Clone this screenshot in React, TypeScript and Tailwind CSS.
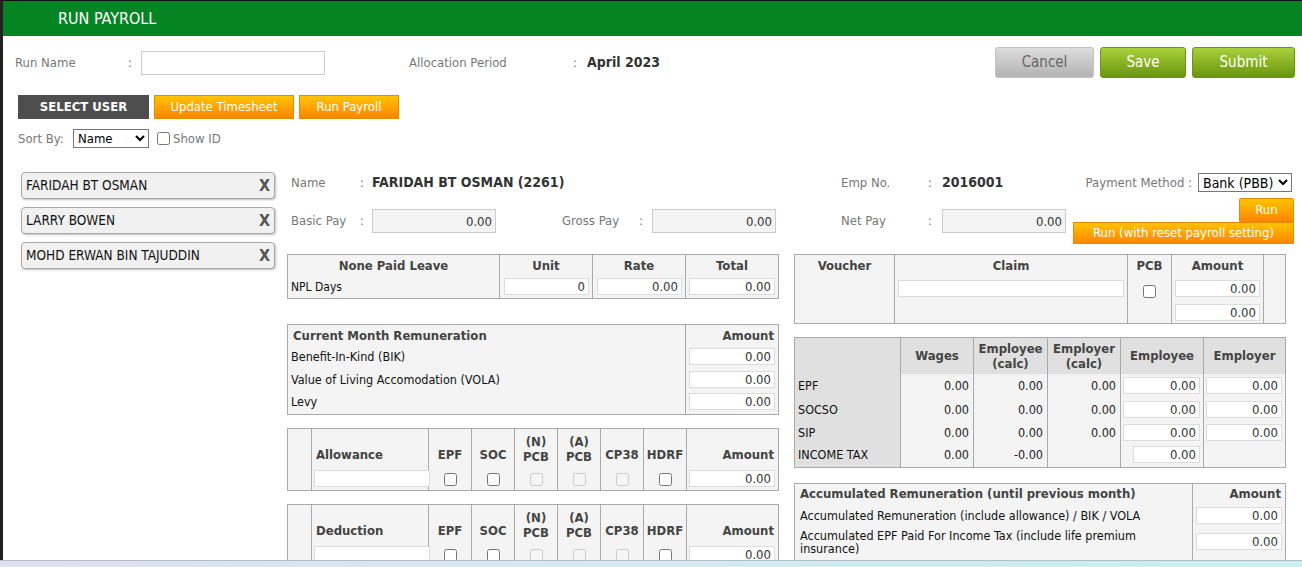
import React from 'react'

const Inp = ({ w = 'w-[86px]', v = '0.00' }: { w?: string; v?: string }) => (
  <input
    readOnly
    value={v}
    className={`${w} h-[17px] border border-[#dcdcdc] bg-white px-[3px] text-right text-[13px] leading-none text-[#333] outline-none`}
  />
)

const Cb = ({ off = false }: { off?: boolean }) => (
  <input type="checkbox" disabled={off} className="m-0 h-[13px] w-[13px] align-middle" />
)

const users = ['FARIDAH BT OSMAN', 'LARRY BOWEN', 'MOHD ERWAN BIN TAJUDDIN']

const stat = [
  { k: 'EPF', w: '0.00', a: '0.00', b: '0.00', r: true },
  { k: 'SOCSO', w: '0.00', a: '0.00', b: '0.00', r: true },
  { k: 'SIP', w: '0.00', a: '0.00', b: '0.00', r: true },
  { k: 'INCOME TAX', w: '0.00', a: '-0.00', b: '', r: false },
]

function FlagTable({ title }: { title: string }) {
  return (
    <table className="w-[492px] table-fixed border-collapse border border-[#aaa] bg-[#f4f4f4]">
      <colgroup>
        <col className="w-[24px]" />
        <col className="w-[117px]" />
        <col className="w-[43px]" />
        <col className="w-[43px]" />
        <col className="w-[43px]" />
        <col className="w-[43px]" />
        <col className="w-[43px]" />
        <col className="w-[43px]" />
        <col />
      </colgroup>
      <tbody>
        <tr className="h-[40px] text-[13px] font-bold leading-[15px] text-[#444]">
          <td rowSpan={2} className="border-r border-[#aaa]"></td>
          <td className="pt-[12px] pl-[4px] text-left align-middle">{title}</td>
          <td className="border-l border-[#aaa] pt-[12px] text-center align-middle">EPF</td>
          <td className="border-l border-[#aaa] pt-[12px] text-center align-middle">SOC</td>
          <td className="border-l border-[#aaa] text-center align-middle">(N)<br />PCB</td>
          <td className="border-l border-[#aaa] text-center align-middle">(A)<br />PCB</td>
          <td className="border-l border-[#aaa] pt-[12px] text-center align-middle">CP38</td>
          <td className="border-l border-[#aaa] pt-[12px] text-center align-middle">HDRF</td>
          <td className="border-l border-[#aaa] pt-[12px] pr-[4px] text-right align-middle">Amount</td>
        </tr>
        <tr className="h-[22px]">
          <td className="pl-[2px] align-top">
            <input readOnly className="h-[17px] w-[116px] border border-[#dcdcdc] bg-white outline-none" />
          </td>
          <td className="border-l border-[#aaa] text-center align-top"><Cb /></td>
          <td className="border-l border-[#aaa] text-center align-top"><Cb /></td>
          <td className="border-l border-[#aaa] text-center align-top"><Cb off /></td>
          <td className="border-l border-[#aaa] text-center align-top"><Cb off /></td>
          <td className="border-l border-[#aaa] text-center align-top"><Cb off /></td>
          <td className="border-l border-[#aaa] text-center align-top"><Cb /></td>
          <td className="border-l border-[#aaa] pr-[3px] text-right align-top"><Inp /></td>
        </tr>
      </tbody>
    </table>
  )
}

export default function App() {
  return (
    <div className="min-h-screen border-t border-l-[3px] border-t-[#111] border-l-[#222] bg-white font-['DejaVu_Sans_Condensed','DejaVu_Sans',sans-serif] text-[13px] font-stretch-condensed text-[#111]">
      <div className="flex h-[35px] items-center bg-[#058423] pl-[55px] text-[16px] text-white">RUN PAYROLL</div>

      {/* top form */}
      <div className="flex items-center pt-[11px] pl-[12px] pr-[7px]">
        <span className="w-[113px] text-[#777]">Run Name</span>
        <span className="w-[13px] text-[#777]">:</span>
        <input readOnly className="h-[24px] w-[184px] border border-[#ccc] bg-white outline-none" />
        <span className="ml-[84px] w-[164px] text-[#777]">Allocation Period</span>
        <span className="w-[14px] text-[#777]">:</span>
        <span className="text-[14px] font-bold text-[#333]">April 2023</span>
        <div className="ml-auto flex gap-[6px] text-[15px]">
          <button className="h-[31px] w-[99px] rounded-[3px] border border-[#c2c2c2] bg-linear-to-b from-[#dcdcdc] to-[#b3b3b3] text-[#666]">Cancel</button>
          <button className="h-[31px] w-[86px] rounded-[3px] border border-[#6f9212] bg-linear-to-b from-[#a9d13a] to-[#6a9609] text-white">Save</button>
          <button className="h-[31px] w-[103px] rounded-[3px] border border-[#6f9212] bg-linear-to-b from-[#a9d13a] to-[#6a9609] text-white">Submit</button>
        </div>
      </div>

      <div className="mt-[17px] flex gap-[5px] pl-[15px] text-[13px]">
        <div className="flex h-[24px] w-[131px] items-center justify-center bg-[#4e4e4e] font-bold text-white">SELECT USER</div>
        <button className="h-[24px] w-[140px] border border-[#e88a00] bg-linear-to-b from-[#ffc400] to-[#ff8400] text-white">Update Timesheet</button>
        <button className="h-[24px] w-[100px] border border-[#e88a00] bg-linear-to-b from-[#ffc400] to-[#ff8400] text-white">Run Payroll</button>
      </div>

      <div className="mt-[10px] flex h-[19px] items-center pl-[15px] text-[13px] text-[#777]">
        <span className="w-[55px]">Sort By:</span>
        <select className="h-[19px] w-[76px] border border-[#767676] bg-white text-[13px] text-black">
          <option>Name</option>
        </select>
        <input type="checkbox" className="m-0 ml-[8px] h-[13px] w-[13px]" />
        <span className="ml-[3px]">Show ID</span>
      </div>

      {/* body */}
      <div className="flex">
        <div className="w-[284px] shrink-0 pt-[24px] pl-[18px]">
          <div className="flex flex-col gap-[8px]">
            {users.map((u) => (
              <div
                key={u}
                className="flex h-[27px] w-[254px] items-center justify-between rounded-[4px] border border-[#a8a8a8] bg-[#f1f1f1] pl-[4px] pr-[4px] shadow-[1px_1px_2px_rgba(0,0,0,0.25)]"
              >
                <span className="text-[13.5px] text-[#111]">{u}</span>
                <span className="font-['DejaVu_Sans',sans-serif] text-[16px] font-bold text-[#555]">X</span>
              </div>
            ))}
          </div>
        </div>

        <div className="flex-1 pt-[25px]">
          <div className="flex h-[19px] items-center">
            <span className="w-[73px] pl-[4px] text-[#777]">Name</span>
            <span className="w-[12px] text-[#777]">:</span>
            <span className="w-[469px] text-[14px] font-bold text-[#333]">FARIDAH BT OSMAN (2261)</span>
            <span className="w-[87px] text-[#777]">Emp No.</span>
            <span className="w-[14px] text-[#777]">:</span>
            <span className="text-[14px] font-bold text-[#333]">2016001</span>
            <div className="ml-auto flex items-center gap-[6px] pr-[10px]">
              <span className="text-[#777]">Payment Method :</span>
              <select className="h-[19px] w-[94px] border border-[#767676] bg-white text-[14px] text-black">
                <option>Bank (PBB)</option>
              </select>
            </div>
          </div>

          <div className="mt-[6px] flex h-[46px] items-center">
            <span className="w-[73px] pl-[4px] text-[#777]">Basic Pay</span>
            <span className="w-[12px] text-[#777]">:</span>
            <input readOnly value="0.00" className="h-[24px] w-[124px] border border-[#ccc] bg-[#f4f4f4] pr-[3px] text-right text-[13px] text-[#333] outline-none" />
            <span className="ml-[66px] w-[77px] text-[#777]">Gross Pay</span>
            <span className="w-[13px] text-[#777]">:</span>
            <input readOnly value="0.00" className="h-[24px] w-[124px] border border-[#ccc] bg-[#f4f4f4] pr-[3px] text-right text-[13px] text-[#333] outline-none" />
            <span className="ml-[65px] w-[87px] text-[#777]">Net Pay</span>
            <span className="w-[14px] text-[#777]">:</span>
            <input readOnly value="0.00" className="h-[24px] w-[124px] border border-[#ccc] bg-[#f4f4f4] pr-[3px] text-right text-[13px] text-[#333] outline-none" />
            <div className="ml-auto flex flex-col items-end self-stretch pr-[8px] text-[13px] text-white">
              <button className="h-[24px] w-[55px] rounded-t-[2px] border border-[#e88a00] bg-linear-to-b from-[#ffc400] to-[#ff8400]">Run</button>
              <button className="h-[22px] w-[221px] border border-[#e88a00] bg-linear-to-b from-[#ffc400] to-[#ff8400]">Run (with reset payroll setting)</button>
            </div>
          </div>

          <div className="mt-[10px] flex gap-[15px]">
            {/* middle column */}
            <div className="flex w-[492px] flex-col">
              <table className="w-[492px] table-fixed border-collapse border border-[#aaa] bg-[#f4f4f4]">
                <colgroup>
                  <col className="w-[212px]" />
                  <col className="w-[93px]" />
                  <col className="w-[93px]" />
                  <col />
                </colgroup>
                <thead>
                  <tr className="h-[21px] text-[13px] font-bold text-[#444]">
                    <th>None Paid Leave</th>
                    <th className="border-l border-[#aaa]">Unit</th>
                    <th className="border-l border-[#aaa]">Rate</th>
                    <th className="border-l border-[#aaa]">Total</th>
                  </tr>
                </thead>
                <tbody>
                  <tr className="h-[23px]">
                    <td className="pl-[3px] text-[12px]">NPL Days</td>
                    <td className="border-l border-[#aaa] pr-[3px] text-right"><Inp w="w-[85px]" v="0" /></td>
                    <td className="border-l border-[#aaa] pr-[3px] text-right"><Inp w="w-[85px]" /></td>
                    <td className="border-l border-[#aaa] pr-[3px] text-right"><Inp w="w-[86px]" /></td>
                  </tr>
                </tbody>
              </table>

              <table className="mt-[25px] w-[492px] table-fixed border-collapse border border-[#aaa] bg-[#f4f4f4]">
                <colgroup>
                  <col className="w-[398px]" />
                  <col />
                </colgroup>
                <thead>
                  <tr className="h-[21px] text-[13px] font-bold text-[#444]">
                    <th className="pl-[5px] text-left">Current Month Remuneration</th>
                    <th className="border-l border-[#aaa] pr-[4px] text-right">Amount</th>
                  </tr>
                </thead>
                <tbody className="text-[12.5px]">
                  {['Benefit-In-Kind (BIK)', 'Value of Living Accomodation (VOLA)', 'Levy'].map((r) => (
                    <tr key={r} className="h-[23px]">
                      <td className="pl-[3px]">{r}</td>
                      <td className="border-l border-[#aaa] pr-[3px] text-right"><Inp /></td>
                    </tr>
                  ))}
                </tbody>
              </table>

              <div className="mt-[13px]"><FlagTable title="Allowance" /></div>
              <div className="mt-[13px]"><FlagTable title="Deduction" /></div>
            </div>

            {/* right column */}
            <div className="flex w-[492px] flex-col">
              <table className="w-[492px] table-fixed border-collapse border border-[#aaa] bg-[#f4f4f4]">
                <colgroup>
                  <col className="w-[100px]" />
                  <col className="w-[233px]" />
                  <col className="w-[44px]" />
                  <col className="w-[92px]" />
                  <col />
                </colgroup>
                <tbody>
                  <tr className="h-[69px] align-top">
                    <td className="pt-[1px] text-center text-[13px] font-bold text-[#444]">Voucher</td>
                    <td className="border-l border-[#aaa] px-[3px] pt-[1px] text-center">
                      <div className="text-[13px] font-bold text-[#444]">Claim</div>
                      <input readOnly className="mt-[4px] h-[17px] w-[226px] border border-[#dcdcdc] bg-white outline-none" />
                    </td>
                    <td className="border-l border-[#aaa] pt-[1px] text-center">
                      <div className="text-[13px] font-bold text-[#444]">PCB</div>
                      <div className="mt-[5px]"><Cb /></div>
                    </td>
                    <td className="border-l border-[#aaa] pt-[1px] text-center">
                      <div className="text-[13px] font-bold text-[#444]">Amount</div>
                      <div className="mt-[4px] flex flex-col items-center gap-[7px]">
                        <Inp w="w-[85px]" />
                        <Inp w="w-[85px]" />
                      </div>
                    </td>
                    <td className="border-l border-[#aaa]"></td>
                  </tr>
                </tbody>
              </table>

              <table className="mt-[13px] w-[492px] table-fixed border-collapse border border-[#aaa] bg-[#f4f4f4]">
                <colgroup>
                  <col className="w-[106px]" />
                  <col className="w-[73px]" />
                  <col className="w-[74px]" />
                  <col className="w-[73px]" />
                  <col className="w-[83px]" />
                  <col />
                </colgroup>
                <thead>
                  <tr className="h-[36px] bg-[#e0e0e0] text-[13px] font-bold leading-[15px] text-[#444]">
                    <th></th>
                    <th className="border-l border-[#aaa]">Wages</th>
                    <th className="border-l border-[#aaa]">Employee<br />(calc)</th>
                    <th className="border-l border-[#aaa]">Employer<br />(calc)</th>
                    <th className="border-l border-[#aaa]">Employee</th>
                    <th className="border-l border-[#aaa]">Employer</th>
                  </tr>
                </thead>
                <tbody className="text-[12.5px] text-[#222]">
                  {stat.map((s, i) => (
                    <tr key={s.k} className={i === 0 ? 'h-[25px]' : 'h-[23px]'}>
                      <td className="bg-[#e0e0e0] pl-[3px] text-[#111]">{s.k}</td>
                      <td className="border-l border-[#aaa] pr-[4px] text-right">{s.w}</td>
                      <td className="border-l border-[#aaa] pr-[4px] text-right">{s.a}</td>
                      <td className="border-l border-[#aaa] pr-[4px] text-right">{s.b}</td>
                      <td className="border-l border-[#aaa] pr-[3px] text-right">
                        {s.r ? <Inp w="w-[77px]" /> : <Inp w="w-[67px]" />}
                      </td>
                      <td className="border-l border-[#aaa] pr-[3px] text-right">{s.r ? <Inp w="w-[76px]" /> : null}</td>
                    </tr>
                  ))}
                </tbody>
              </table>

              <table className="mt-[15px] w-[492px] table-fixed border-collapse border border-[#aaa] bg-[#f4f4f4]">
                <colgroup>
                  <col className="w-[398px]" />
                  <col />
                </colgroup>
                <thead>
                  <tr className="h-[20px] text-[13px] font-bold text-[#444]">
                    <th className="pl-[5px] text-left">Accumulated Remuneration (until previous month)</th>
                    <th className="border-l border-[#aaa] pr-[4px] text-right">Amount</th>
                  </tr>
                </thead>
                <tbody className="text-[12.5px] leading-[13px]">
                  <tr className="h-[23px]">
                    <td className="pl-[5px]">Accumulated Remuneration (include allowance) / BIK / VOLA</td>
                    <td className="border-l border-[#aaa] pr-[3px] text-right"><Inp w="w-[86px]" /></td>
                  </tr>
                  <tr className="h-[30px]">
                    <td className="pl-[5px] pr-[40px]">Accumulated EPF Paid For Income Tax (include life premium insurance)</td>
                    <td className="border-l border-[#aaa] pr-[3px] text-right"><Inp w="w-[86px]" /></td>
                  </tr>
                  <tr className="h-[30px]">
                    <td></td>
                    <td className="border-l border-[#aaa]"></td>
                  </tr>
                </tbody>
              </table>
            </div>
          </div>
        </div>
      </div>

      <div className="fixed right-0 bottom-0 left-0 h-[7px] border-t border-[#b4bcc8] bg-linear-to-r from-[#dde0f0] to-[#c9f2f2]"></div>
    </div>
  )
}
